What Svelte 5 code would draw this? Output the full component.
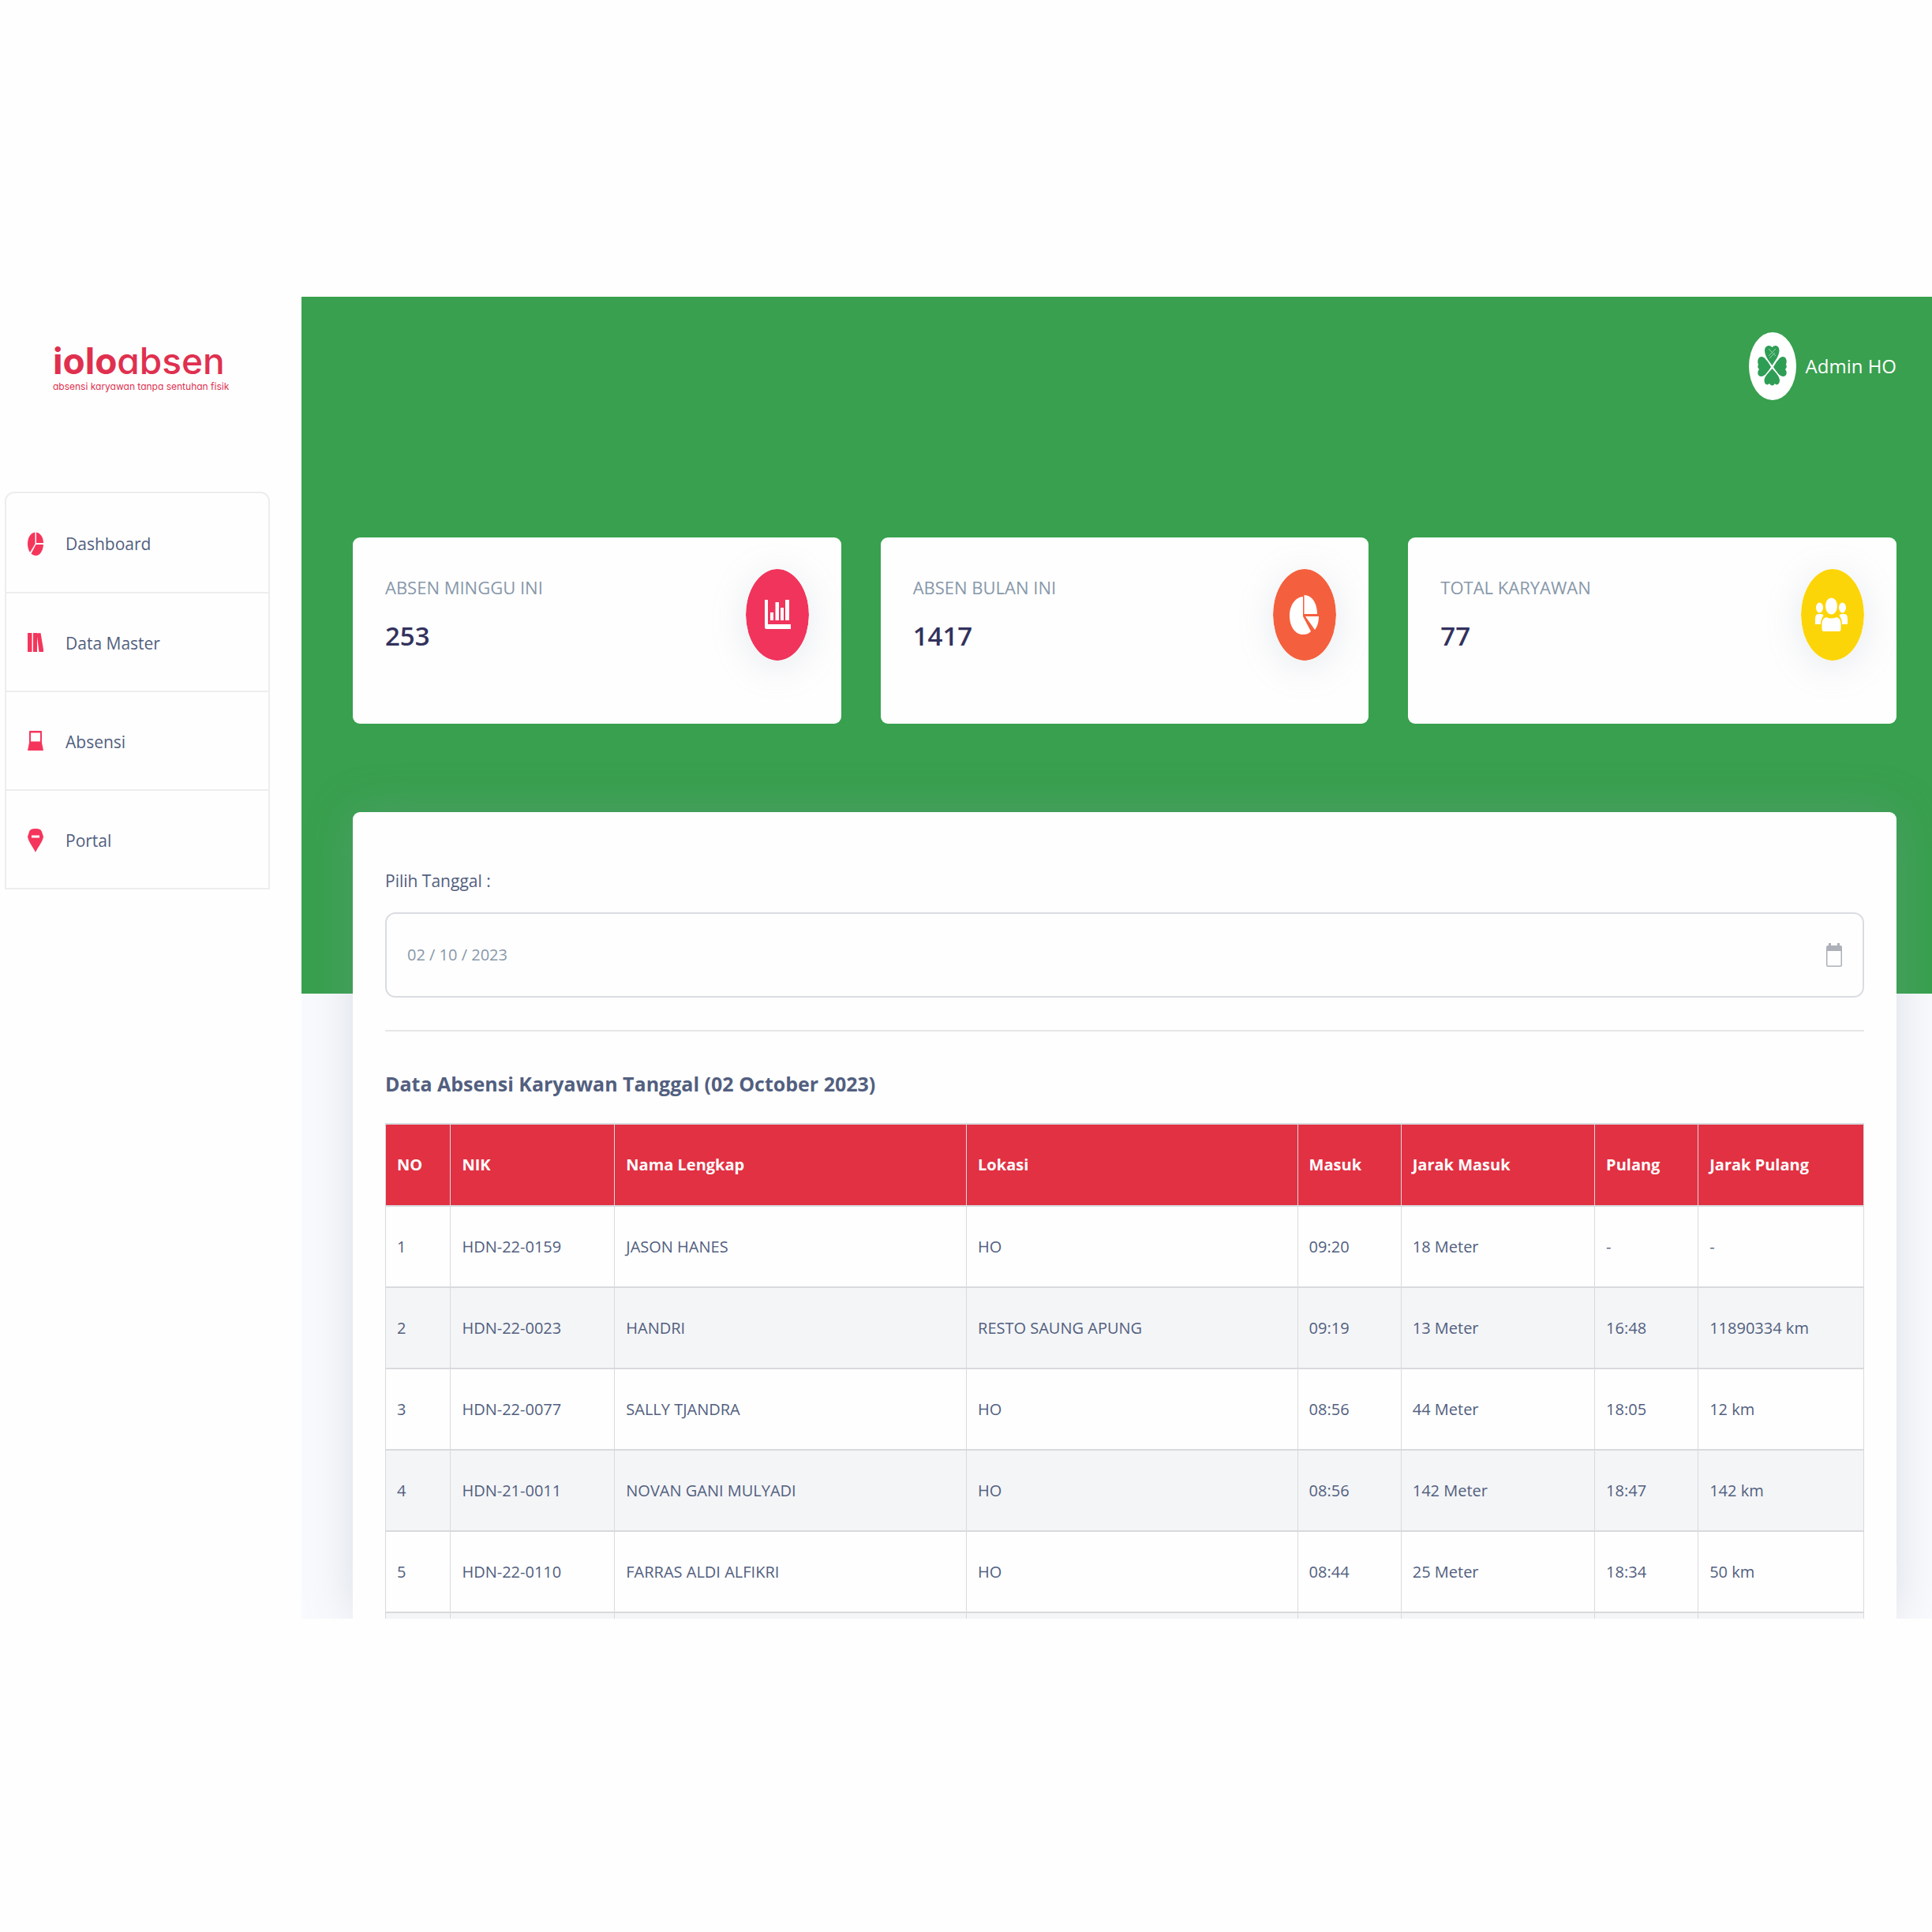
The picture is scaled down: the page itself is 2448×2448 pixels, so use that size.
<script>
  const menu = [
    { label: 'Dashboard', icon: 'pie' },
    { label: 'Data Master', icon: 'books' },
    { label: 'Absensi', icon: 'laptop' },
    { label: 'Portal', icon: 'pin' }
  ];

  const stats = [
    { label: 'ABSEN MINGGU INI', value: '253', icon: 'bars', tone: 'pink' },
    { label: 'ABSEN BULAN INI', value: '1417', icon: 'chart', tone: 'orange' },
    { label: 'TOTAL KARYAWAN', value: '77', icon: 'people', tone: 'yellow' }
  ];

  const columns = ['NO', 'NIK', 'Nama Lengkap', 'Lokasi', 'Masuk', 'Jarak Masuk', 'Pulang', 'Jarak Pulang'];

  const rows = [
    ['1', 'HDN-22-0159', 'JASON HANES', 'HO', '09:20', '18 Meter', '-', '-'],
    ['2', 'HDN-22-0023', 'HANDRI', 'RESTO SAUNG APUNG', '09:19', '13 Meter', '16:48', '11890334 km'],
    ['3', 'HDN-22-0077', 'SALLY TJANDRA', 'HO', '08:56', '44 Meter', '18:05', '12 km'],
    ['4', 'HDN-21-0011', 'NOVAN GANI MULYADI', 'HO', '08:56', '142 Meter', '18:47', '142 km'],
    ['5', 'HDN-22-0110', 'FARRAS ALDI ALFIKRI', 'HO', '08:44', '25 Meter', '18:34', '50 km']
  ];

  let date = $state('02 / 10 / 2023');
</script>

<div class="app">
  <aside class="sidebar">
    <a class="brand" href="#home">
      <span class="name"><b>iolo</b>absen</span>
      <span class="tagline">absensi karyawan tanpa sentuhan fisik</span>
    </a>
    <nav class="menu" aria-label="Menu">
      {#each menu as item}
        <a class="item" href="#{item.icon}">
          <svg class="menu-icon" viewBox="0 0 20 30" preserveAspectRatio="none" aria-hidden="true">
            {#if item.icon === 'pie'}
              <path d="M9.500 0.5V15L3 26C1 23 0 19 0 15C0 7 4 1 9.500 0.500Z" />
              <path d="M11 0.5C16 1 20 7 20 14H11Z" />
              <path d="M10.500 16H20C19.5 24 15.5 30 10.5 30C8 30 6 29 4.5 27.5Z" />
            {:else if item.icon === 'books'}
              <path d="M0 2H5.5V26H0ZM7 2H12V26H7ZM11.5 2.5L16.5 2L20.5 26H14.5Z" />
            {:else if item.icon === 'laptop'}
              <path fill-rule="evenodd" d="M2 2Q2 1 3 1H17Q18 1 18 2V16L20 26H0L2 16ZM4 3.5V14.5H16V3.5Z" />
            {:else}
              <path fill-rule="evenodd" d="M10 0C15 0 17 1 18 4L20 10C19 17 12 25 10 30C8 25 1 17 0 10L2 4C3 1 5 0 10 0ZM5 8.5V11.5H15V8.5Z" />
            {/if}
          </svg>
          <span>{item.label}</span>
        </a>
      {/each}
    </nav>
  </aside>

  <main class="main">
    <section class="hero">
      <header class="topbar">
        <button class="user" type="button">
          <svg class="avatar" viewBox="0 0 60 86" aria-hidden="true">
            <ellipse cx="30" cy="43" rx="30" ry="43" fill="#fff" />
            <g fill="#2f9e55">
              <path d="M29.500 42C25 36 20 30 20 23C20 17 26 15 29.500 19C33 15 38.500 17 38.500 23C38.500 30 33 36 29.500 42Z" />
              <path d="M29.500 46C34 51 39 56 39 61C39 66 35 68 33 65Q29.500 70 26 65C23 68 19.500 66 19.500 61C19.500 56 25 51 29.500 46Z" />
              <path d="M28 44C24 51 20 56 15.500 56C11 56 10 50 13 47Q10 44 12 41C10 36 12 31 16 31C20 31 24 37 28 44Z" />
              <path d="M31 44C35 51 39 56 43.500 56C48 56 49 50 46 47Q49 44 47 41C49 36 47 31 43 31C39 31 35 37 31 44Z" />
            </g>
            <path d="M25 21L34 30M34 21L25 30M26 33L33 26" stroke="#9ad0ad" stroke-width="1" fill="none" />
            <path d="M18 29L41 58M41 29L18 58" stroke="#fff" stroke-width="1" />
          </svg>
          <span>Admin HO</span>
        </button>
      </header>

      <div class="stats">
        {#each stats as stat}
          <article class="stat">
            <div>
              <h2>{stat.label}</h2>
              <p>{stat.value}</p>
            </div>
            <svg class="badge {stat.tone}" viewBox="0 0 80 116" aria-hidden="true">
              <ellipse cx="40" cy="58" rx="40" ry="58" />
              <g fill="#fff">
                {#if stat.icon === 'bars'}
                  <path d="M24 39H28V70H57V76H26Q24 76 24 73ZM31 55H35V65H31ZM37.500 42H42V65H37.500ZM44 49H48V65H44ZM50 39H55V65H50Z" />
                {:else if stat.icon === 'chart'}
                  <path d="M38 35V60L48 79C45 82 42 83 38 83C28 83 21 73 21 59C21 46 28 36 38 35Z" />
                  <path d="M39.500 33C49 33 56 43 56 57H39.500Z" />
                  <path d="M41 60H58C58 67 56 73 53 77Z" />
                {:else}
                  <ellipse cx="38.500" cy="47" rx="7.500" ry="10.500" />
                  <ellipse cx="23.500" cy="49" rx="4.500" ry="6.500" />
                  <ellipse cx="52.500" cy="49" rx="4.500" ry="6.500" />
                  <path d="M18 70V63Q18 57 22 57H25Q28 57 28.500 59Q25 63 25 70ZM59 70V63Q59 57 55 57H52Q49 57 48.500 59Q52 63 52 70Z" />
                  <path d="M26.500 76V69Q27 62 32 61Q38.500 64 45 61Q50 62 50.500 69V76Q50.500 79 48 79H29Q26.500 79 26.500 76Z" />
                {/if}
              </g>
            </svg>
          </article>
        {/each}
      </div>
    </section>

    <section class="panel">
      <label for="date">Pilih Tanggal :</label>
      <div class="field">
        <input id="date" type="text" bind:value={date} />
        <button type="button" aria-label="Buka kalender">
          <svg viewBox="0 0 20 30" aria-hidden="true">
            <path fill-rule="evenodd" d="M0 5Q0 3 2 3H3V0H6V3H14V0H17V3H18Q20 3 20 5V28Q20 30 18 30H2Q0 30 0 28ZM1.500 10V28.500H18.500V10Z" />
          </svg>
        </button>
      </div>
      <hr />
      <h3>Data Absensi Karyawan Tanggal (02 October 2023)</h3>
      <table>
        <colgroup>
          <col class="c-no" /><col class="c-nik" /><col class="c-name" /><col class="c-place" />
          <col class="c-time" /><col class="c-in" /><col class="c-time" /><col class="c-out" />
        </colgroup>
        <thead>
          <tr>
            {#each columns as column}<th scope="col">{column}</th>{/each}
          </tr>
        </thead>
        <tbody>
          {#each rows as row}
            <tr>
              {#each row as cell}<td>{cell}</td>{/each}
            </tr>
          {/each}
          <tr class="peek" aria-hidden="true">
            {#each columns as _}<td></td>{/each}
          </tr>
        </tbody>
      </table>
    </section>
  </main>
</div>

<style>
  :global(body) {
    margin: 0;
    background: #fefefe;
  }
  .app {
    display: grid;
    grid-template-columns: 382px minmax(0, 1fr);
    padding-top: 376px;
    font-family: 'Open Sans', 'Noto Sans', sans-serif;
    font-size: 21px;
    line-height: 30px;
    color: #525f7f;
  }
  .app * {
    box-sizing: border-box;
  }
  a {
    color: inherit;
    text-decoration: none;
  }
  button {
    border: 0;
    padding: 0;
    background: none;
    font: inherit;
    color: inherit;
    cursor: pointer;
  }

  .sidebar {
    padding: 36px 40px 0 6px;
  }
  .brand {
    display: flex;
    flex-direction: column;
    height: 211px;
    padding: 20px 0 0 61px;
    font-family: Inter, 'Open Sans', sans-serif;
    font-feature-settings: 'cv11';
    color: #e0304f;
    white-space: nowrap;
  }
  .name {
    font-size: 46px;
    line-height: 50px;
    font-weight: 500;
  }
  .name b {
    font-weight: 700;
  }
  .tagline {
    font-size: 12px;
    line-height: 16px;
  }
  .menu {
    border: 2px solid #ededee;
    border-radius: 12px 12px 0 0;
  }
  .item {
    display: flex;
    align-items: center;
    gap: 28px;
    height: 125px;
    padding: 2px 0 0 27px;
  }
  .item + .item {
    border-top: 2px solid #ededee;
  }
  .menu-icon {
    width: 20px;
    height: 30px;
    fill: #f5365c;
  }

  .main {
    overflow: hidden;
    background: #f9fafd;
  }
  .hero {
    padding: 45px 45px 342px 65px;
    background: #38a04e;
  }
  .topbar {
    display: flex;
    justify-content: flex-end;
    height: 260px;
    align-items: flex-start;
  }
  .user {
    display: flex;
    align-items: center;
    gap: 12px;
    font-size: 24px;
    color: #fff;
  }
  .avatar {
    width: 60px;
    height: 86px;
  }
  .stats {
    display: grid;
    grid-template-columns: repeat(3, minmax(0, 1fr));
    gap: 50px;
  }
  .stat {
    display: flex;
    justify-content: space-between;
    align-items: flex-start;
    height: 236px;
    padding: 40px 41px;
    border-radius: 9px;
    background: #fefefe;
  }
  .stat h2 {
    margin: 0;
    font-size: 22px;
    line-height: 46px;
    font-weight: 400;
    color: #8898aa;
  }
  .stat p {
    margin: 14px 0 0;
    font-size: 33px;
    line-height: 50px;
    font-weight: 600;
    color: #32325d;
  }
  .badge {
    width: 80px;
    height: 116px;
    border-radius: 50%;
    box-shadow: 0 8px 48px rgba(136, 152, 170, 0.2);
  }
  .pink {
    fill: #f0345c;
  }
  .orange {
    fill: #f4603e;
  }
  .yellow {
    fill: #fcd508;
  }

  .panel {
    margin: -230px 45px 0 65px;
    padding: 72px 41px 0;
    border-radius: 9px 9px 0 0;
    background: #fefefe;
    box-shadow: 0 0 60px rgba(136, 152, 170, 0.28);
  }
  .panel label {
    display: block;
  }
  .field {
    display: flex;
    align-items: center;
    height: 108px;
    margin-top: 25px;
    padding: 0 26px;
    border: 2px solid #d9dce1;
    border-radius: 13px;
  }
  .field input {
    flex: 1;
    min-width: 0;
    border: 0;
    padding: 0;
    outline: 0;
    background: none;
    font: inherit;
    font-size: 20px;
    color: #8898aa;
  }
  .field button {
    display: flex;
  }
  .field svg {
    width: 20px;
    height: 30px;
    fill: #adb0b8;
  }
  hr {
    margin: 41px 0 0;
    border: 0;
    border-top: 2px solid #e6e6e8;
  }
  h3 {
    margin: 48px 0 32px;
    font-size: 25px;
    line-height: 36px;
    font-weight: 700;
  }
  table {
    width: 100%;
    table-layout: fixed;
    border-collapse: collapse;
    font-size: 20px;
  }
  .c-no { width: 4.4%; }
  .c-nik { width: 11.1%; }
  .c-name { width: 23.8%; }
  .c-place { width: 22.4%; }
  .c-time { width: 7%; }
  .c-in { width: 13.1%; }
  .c-out { width: 11.2%; }
  th,
  td {
    height: 103px;
    padding: 0 14px;
    border: 1px solid #d9dadd;
    border-width: 2px 1px;
    text-align: left;
    white-space: nowrap;
  }
  th {
    height: 104px;
    background: #e13143;
    color: #fff;
    font-weight: 700;
  }
  tbody tr:nth-child(even) {
    background: #f4f5f7;
  }
  .peek td {
    height: 8px;
    border-bottom: 0;
  }
</style>
